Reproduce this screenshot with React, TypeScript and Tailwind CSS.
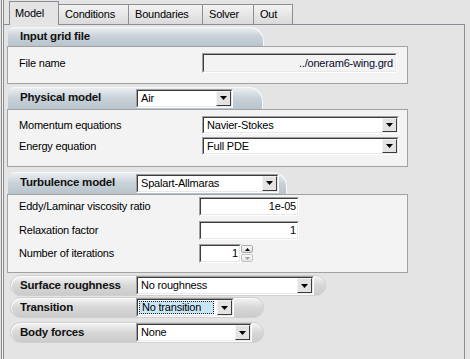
import React from 'react'

// Solver setup dialog — "Model" tab of a WinForms-style property page.

const FONT = { fontFamily: '"Liberation Sans", Arial, sans-serif' }

const TABS = [
  { label: 'Conditions', w: 'w-[70px]' },
  { label: 'Boundaries', w: 'w-[74px]' },
  { label: 'Solver', w: 'w-[51px]' },
  { label: 'Out', w: 'w-[39px]' },
]

function Sunken({ className, children }: { className: string; children?: React.ReactNode }) {
  return (
    <div className={`border border-t-[#a0a0a0] border-l-[#a0a0a0] border-b-white border-r-white ${className}`}>
      <div className="w-full h-full border border-t-[#3c3c3c] border-l-[#3c3c3c] border-b-[#e8e8e8] border-r-[#e8e8e8] flex items-stretch">
        {children}
      </div>
    </div>
  )
}

function DropButton() {
  return (
    <div className="w-[15px] border border-t-[#f4f4f4] border-l-[#f4f4f4] border-b-[#3c3c3c] border-r-[#3c3c3c] bg-[#e3e3e3] flex items-center justify-center">
      <svg width="7" height="4" viewBox="0 0 7 4">
        <path d="M0 0h7L3.5 4z" fill="#000" />
      </svg>
    </div>
  )
}

function Combo({ value, w, h = 'h-[19px]', focused = false }: { value: string; w: string; h?: string; focused?: boolean }) {
  return (
    <Sunken className={`${w} ${h} bg-white`}>
      {focused ? (
        <div className="flex-1 flex items-center m-px mr-[3px]">
          <span className="flex-1 h-full flex items-center pl-[2px] bg-[#c9e6f7] border border-dotted border-[#222]">{value}</span>
        </div>
      ) : (
        <div className="flex-1 flex items-center pl-[3px] text-black">{value}</div>
      )}
      <DropButton />
    </Sunken>
  )
}

function NumBox({ value, w = 'w-[100px]' }: { value: string; w?: string }) {
  return (
    <Sunken className={`${w} h-[19px] bg-white`}>
      <div className="flex-1 flex items-center justify-end pr-[1px]">{value}</div>
    </Sunken>
  )
}

function Spinner() {
  return (
    <div className="flex h-[19px] items-center">
      <NumBox value="1" w="w-[42px]" />
      <div className="w-[12px] h-[17px] flex flex-col gap-px">
        <div className="flex-1 rounded-[2px] border border-[#a8a8a8] bg-linear-to-b from-[#fafafa] to-[#dedede] flex items-center justify-center">
          <svg width="5" height="3" viewBox="0 0 5 3"><path d="M0 3h5L2.5 0z" fill="#000" /></svg>
        </div>
        <div className="flex-1 rounded-[2px] border border-[#c4c4c4] bg-linear-to-b from-[#fafafa] to-[#e4e4e4] flex items-center justify-center">
          <svg width="5" height="3" viewBox="0 0 5 3"><path d="M0 0h5L2.5 3z" fill="#a0a0a0" /></svg>
        </div>
      </div>
    </div>
  )
}

function Header({ title, w, h, mt, children }: { title: string; w: string; h: string; mt: string; children?: React.ReactNode }) {
  return (
    <div className={`ml-[4px] ${mt} ${w} ${h} rounded-tl-[7px] rounded-tr-[14px] bg-linear-to-b from-[#eef1f3] via-[#c9d2d9] to-[#b8c3cc] shadow-[inset_-1px_1px_0_#f6f8f9] flex items-center pl-[12px]`}>
      <span className="w-[116px] font-bold text-[11.5px] text-[#111]">{title}</span>
      {children}
    </div>
  )
}

function Pill({ title, w, mt, children }: { title: string; w: string; mt: string; children?: React.ReactNode }) {
  return (
    <div className={`ml-[6px] ${mt} ${w} h-[21px] rounded-full border border-[#cfcfcf] bg-linear-to-b from-[#f4f4f4] via-[#d7d7d7] to-[#cbcbcb] shadow-[inset_1px_1px_0_#fbfbfb] flex items-center pl-[9px]`}>
      <span className="w-[116px] font-bold text-[11.5px] text-[#111]">{title}</span>
      {children}
    </div>
  )
}

function Row({ label, mt, lw = 'w-[183px]', children }: { label: string; mt: string; lw?: string; children: React.ReactNode }) {
  return (
    <div className={`flex items-center ${mt}`}>
      <span className={lw}>{label}</span>
      {children}
    </div>
  )
}

export default function App() {
  return (
    <div
      className="w-[470px] h-[359px] overflow-hidden bg-[#e4e4e4] flex text-[11px] tracking-[-0.2px] text-black"
      style={FONT}
    >
      {/* left window edge */}
      <div className="w-[4px] flex">
        <div className="w-px bg-[#e4e4e4]" />
        <div className="w-px bg-[#8c8c8c]" />
        <div className="w-px bg-[#f2f2f2]" />
        <div className="w-px bg-[#8c8c8c]" />
      </div>

      <div className="w-[461px] flex flex-col">
        {/* tab strip */}
        <div className="h-[25px] flex items-end pl-[5px] border-b border-[#8a8d94]">
          <div className="w-[50px] h-[24px] -mb-px border border-b-0 border-[#8a8d94] bg-[#e4e4e4] flex items-center pl-[5px] pb-px">
            Model
          </div>
          {TABS.map((t) => (
            <div
              key={t.label}
              className={`${t.w} h-[20px] border-t border-r border-[#8a8d94] bg-linear-to-b from-[#f3f3f3] to-[#dadada] flex items-center pl-[6px]`}
            >
              {t.label}
            </div>
          ))}
        </div>

        {/* tab page */}
        <div className="flex-1 border-r border-[#8a8d94] flex flex-col">
          <Header title="Input grid file" w="w-[256px]" h="h-[19px]" mt="mt-[2px]" />
          <div className="ml-[3px] w-[401px] h-[38px] border border-[#a2a2a2] bg-[#f3f3f3] pl-[11px] pt-[6px]">
            <Row label="File name" mt="mt-0">
              <Sunken className="w-[195px] h-[20px] bg-[#f3f3f3]">
                <div className="flex-1 flex items-center justify-end pr-[2px] text-[#0a0a30]">../oneram6-wing.grd</div>
              </Sunken>
            </Row>
          </div>

          <Header title="Physical model" w="w-[255px]" h="h-[22px]" mt="mt-[3px]">
            <Combo value="Air" w="w-[97px]" />
          </Header>
          <div className="ml-[3px] w-[401px] h-[58px] border border-[#a2a2a2] bg-[#f3f3f3] pl-[11px] pt-[6px]">
            <Row label="Momentum equations" mt="mt-0">
              <Combo value="Navier-Stokes" w="w-[197px]" h="h-[18px]" />
            </Row>
            <Row label="Energy equation" mt="mt-[3px]">
              <Combo value="Full PDE" w="w-[197px]" h="h-[18px]" />
            </Row>
          </div>

          <Header title="Turbulence model" w="w-[279px]" h="h-[22px]" mt="mt-[5px]">
            <Combo value="Spalart-Allmaras" w="w-[143px]" />
          </Header>
          <div className="ml-[3px] w-[401px] h-[79px] border border-[#a2a2a2] bg-[#f3f3f3] pl-[11px] pt-[2px]">
            <Row label="Eddy/Laminar viscosity ratio" mt="mt-0" lw="w-[180px]">
              <NumBox value="1e-05" />
            </Row>
            <Row label="Relaxation factor" mt="mt-[5px]" lw="w-[180px]">
              <NumBox value="1" />
            </Row>
            <Row label="Number of iterations" mt="mt-[4px]" lw="w-[180px]">
              <Spinner />
            </Row>
          </div>

          <Pill title="Surface roughness" w="w-[316px]" mt="mt-[2px]">
            <Combo value="No roughness" w="w-[178px]" />
          </Pill>
          <Pill title="Transition" w="w-[254px]" mt="mt-px">
            <Combo value="No transition" w="w-[98px]" focused />
          </Pill>
          <Pill title="Body forces" w="w-[254px]" mt="mt-[4px]">
            <Combo value="None" w="w-[116px]" />
          </Pill>
        </div>
      </div>
    </div>
  )
}
